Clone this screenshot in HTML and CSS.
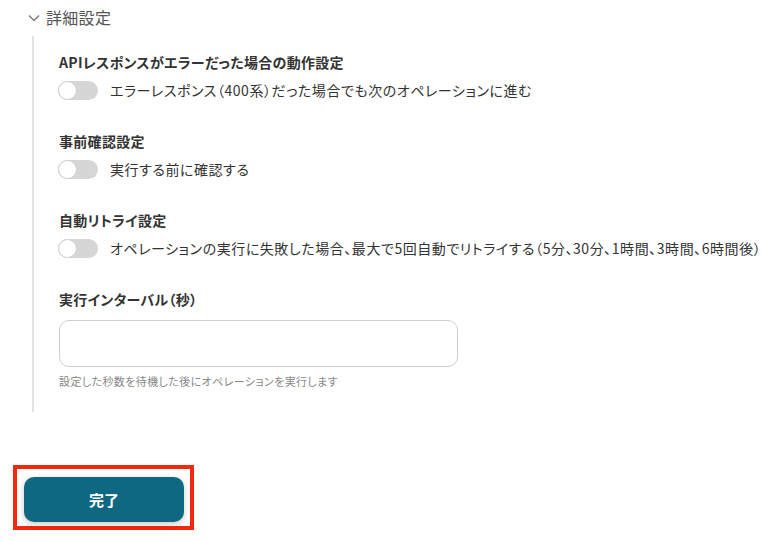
FILE: index.html
```html
<!DOCTYPE html>
<html>
<head>
    <title>詳細設定</title>
    <link rel="stylesheet" href="styles.css">
</head>
<body>
    <div class="details">
        <div class="details-head">
            <svg class="chevron" width="12" height="8" viewBox="0 0 12 8"><path d="M1 1.5 L6 6.5 L11 1.5" fill="none" stroke="#777" stroke-width="1.3"/></svg>
            <span>詳細設定</span>
        </div>
        <div class="details-body">
            <div class="setting">
                <p class="setting-title">APIレスポンスがエラーだった場合の動作設定</p>
                <div class="toggle-row">
                    <span class="toggle"></span>
                    <span>エラーレスポンス（400系）だった場合でも次のオペレーションに進む</span>
                </div>
            </div>

            <div class="setting">
                <p class="setting-title">事前確認設定</p>
                <div class="toggle-row">
                    <span class="toggle"></span>
                    <span>実行する前に確認する</span>
                </div>
            </div>

            <div class="setting">
                <p class="setting-title">自動リトライ設定</p>
                <div class="toggle-row">
                    <span class="toggle"></span>
                    <span>オペレーションの実行に失敗した場合、最大で5回自動でリトライする（5分、30分、1時間、3時間、6時間後）</span>
                </div>
            </div>

            <div class="setting last">
                <p class="setting-title">実行インターバル（秒）</p>
                <input type="text" class="interval">
                <p class="hint">設定した秒数を待機した後にオペレーションを実行します</p>
            </div>
        </div>
    </div>

    <div class="actions">
        <div class="highlight">
            <button class="done">完了</button>
        </div>
    </div>
</body>
</html>
```

FILE: styles.css
```css
body {
    margin: 0;
    background: #fff;
    font-family: "Noto Sans CJK JP", "Noto Sans", sans-serif;
    font-feature-settings: "palt";
    color: #333;
}

p {
    margin: 0;
}

.details {
    padding: 5px 0 0 28px;
}

.details-head {
    display: flex;
    align-items: center;
    gap: 6px;
    height: 24px;
    font-size: 16px;
    color: #555;
    letter-spacing: 0.3px;
}

.chevron {
    margin-top: 1px;
}

.details-body {
    margin: 7px 0 0 4px;
    border-left: 2px solid #e4e4e4;
    padding: 16px 0 23px 25px;
}

.setting {
    margin-bottom: 31px;
}

.setting.last {
    margin-bottom: 0;
}

.setting-title {
    font-size: 14px;
    line-height: 20px;
    font-weight: 700;
    color: #333;
    letter-spacing: 0.3px;
}

.toggle-row {
    display: flex;
    align-items: center;
    gap: 12px;
    margin-top: 8px;
    height: 20px;
    font-size: 14px;
    color: #333;
    white-space: nowrap;
    margin-left: -1px;
    letter-spacing: 0.55px;
}

/* switch, always off here */
.toggle {
    position: relative;
    flex: none;
    width: 40px;
    height: 19px;
    border-radius: 10px;
    background-color: #d6d6d6;
}

.toggle:before {
    content: "";
    position: absolute;
    top: 0;
    left: 0;
    width: 17px;
    height: 17px;
    border-radius: 50%;
    border: 1px solid #d0d0d0;
    background-color: #fff;
}

.interval {
    display: block;
    box-sizing: border-box;
    width: 399px;
    height: 47px;
    margin-top: 11px;
    border: 1px solid #cfcfcf;
    border-radius: 10px;
    background: #fff;
}

.hint {
    margin-top: 6px;
    font-size: 11px;
    line-height: 16px;
    color: #888;
    letter-spacing: 0.4px;
}

.actions {
    margin: 53px 0 0 13px;
}

.highlight {
    display: inline-block;
    border: 4px solid #f4290b;
    padding: 8px 6px 4px 7px;
}

.done {
    display: block;
    width: 160px;
    height: 45px;
    border: none;
    border-radius: 10px;
    background-color: #0e6882;
    color: #fff;
    font-family: "Noto Sans CJK JP", sans-serif;
    font-size: 15px;
    font-weight: 700;
    box-shadow: 0 2px 6px rgba(0, 0, 0, 0.22);
}
```
